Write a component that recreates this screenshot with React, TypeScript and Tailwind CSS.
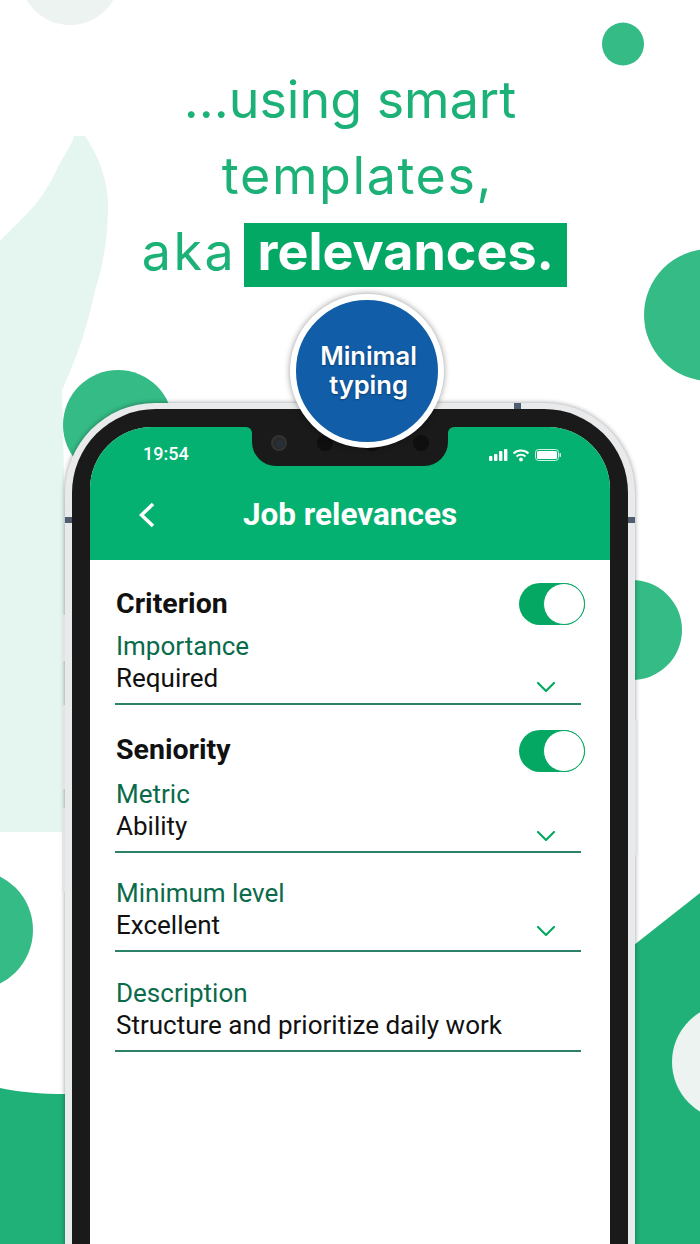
// App.tsx
// Job relevances promo screenshot: phone mockup over soft green shapes

import { ChevronDown } from 'lucide-react'

// Background shapes, drawn behind the copy and the phone
function Backdrop() {
  return (
    <svg className="absolute inset-0" width="700" height="1244" viewBox="0 0 700 1244">
      <path
        d="M0 241 C20 220 42 204 58 167 C66 152 72 145 74 136 L85 136 C98 155 108 180 108 205 C108 240 102 270 95 290 C88 325 76 360 62 390 L66 560 L66 832 L0 832 Z"
        fill="#e5f5ef"
      />
      <circle cx="70" cy="-25" r="50" fill="#ecf3f1" />
      <ellipse cx="623" cy="44" rx="21" ry="21.5" fill="#35bb85" />
      <circle cx="710" cy="315" r="66" fill="#35bb85" />
      <circle cx="118" cy="425" r="55" fill="#35bb85" />
      <circle cx="632" cy="630" r="50" fill="#35bb85" />
      <circle cx="-27" cy="930" r="60" fill="#35bb85" />
      <path d="M0 1088 C20 1092 40 1094 66 1094 L66 1244 L0 1244 Z" fill="#1fb177" />
      <path d="M634 945 L700 893 L700 1244 L634 1244 Z" fill="#1fb177" />
      <circle cx="730" cy="1062" r="58" fill="#ecf3f1" />
    </svg>
  )
}

function Toggle() {
  return (
    <div className="w-[66px] h-[42px] rounded-full bg-[#05a862] flex justify-end -mr-1">
      <div className="w-[42px] h-[42px] rounded-full bg-white border border-[#05a862]" />
    </div>
  )
}

function SectionHead({ title, gap, nudge = '' }: { title: string; gap: string; nudge?: string }) {
  return (
    <div className={`flex items-center justify-between h-[42px] ${gap}`}>
      <span className={`text-[28.5px] font-bold text-[#111111] pl-px ${nudge}`}>{title}</span>
      <Toggle />
    </div>
  )
}

interface FieldProps {
  label: string
  value: string
  chevron?: string
  gap?: string
}

function Field({ label, value, chevron, gap = 'mb-[25px]' }: FieldProps) {
  return (
    <div className={`border-b-2 border-[#2c8268] pb-[9px] ${gap}`}>
      <div className="text-[26px] leading-[31px] text-[#0a6b4b] pl-px">{label}</div>
      <div className="flex items-end justify-between h-[32px]">
        <span className="text-[26px] leading-[32px] text-[#111111] pl-px">{value}</span>
        {chevron && <ChevronDown className={`w-[32px] h-[32px] mr-[19px] text-[#05a862] ${chevron}`} strokeWidth={1.6} />}
      </div>
    </div>
  )
}

function StatusIcons() {
  return (
    <svg width="72" height="14" viewBox="0 0 72 14" fill="none">
      <rect x="0" y="8" width="3.4" height="5" rx="1" fill="#fff" />
      <rect x="5" y="6" width="3.4" height="7" rx="1" fill="#fff" />
      <rect x="10" y="3" width="3.4" height="10" rx="1" fill="#fff" />
      <rect x="15" y="1" width="3.4" height="12" rx="1" fill="#fff" />
      <path d="M24.5 5.5 C28.5 1.5 35.5 1.5 39.5 5.5" stroke="#fff" strokeWidth="2" />
      <path d="M27.5 8.5 C30 6.2 34 6.2 36.5 8.5" stroke="#fff" strokeWidth="2" />
      <circle cx="32" cy="11.5" r="1.9" fill="#fff" />
      <rect x="46.5" y="1.5" width="23" height="11" rx="3" stroke="#d4f2e4" />
      <rect x="48" y="3" width="20" height="8" rx="1.5" fill="#fff" />
      <rect x="70.5" y="5" width="1.5" height="4" rx="0.7" fill="#d4f2e4" />
    </svg>
  )
}

function Notch() {
  return (
    <div className="absolute left-[162px] top-0 w-[196px] h-[39px] bg-[#1a1a1a] rounded-b-[24px] flex items-center pl-[19px] pb-[7px]">
      {/* flared corners where the notch meets the screen edge */}
      <div className="absolute -left-[6px] top-0 w-[6px] h-[6px] bg-[#1a1a1a]">
        <div className="w-full h-full bg-[#05b171] rounded-tr-[6px]" />
      </div>
      <div className="absolute -right-[6px] top-0 w-[6px] h-[6px] bg-[#1a1a1a]">
        <div className="w-full h-full bg-[#05b171] rounded-tl-[6px]" />
      </div>
      <div className="w-[16px] h-[16px] rounded-full bg-[#2a2a2a] border-2 border-[#333] flex items-center justify-center">
        <div className="w-[7px] h-[7px] rounded-full bg-[#26303c]" />
      </div>
      <div className="w-[16px] h-[16px] rounded-full bg-[#0f0f0f] ml-[30px]" />
      <div className="w-[16px] h-[16px] rounded-full bg-[#0f0f0f] ml-[31px]" />
      <div className="w-[16px] h-[16px] rounded-full bg-[#0f0f0f] ml-[33px]" />
    </div>
  )
}

function Phone() {
  return (
    <div className="relative ml-[65px] mt-[113px] w-[570px] h-[900px] rounded-t-[90px] bg-[#e9eaec] pt-[6px] px-[7px] shadow-[0_0_5px_rgba(0,0,0,0.4)]">
      {/* antenna ticks and side buttons */}
      <div className="absolute left-[449px] top-0 w-[7px] h-[6px] bg-[#4e5d70]" />
      <div className="absolute left-0 top-[114px] w-[7px] h-[6px] bg-[#4e5d70]" />
      <div className="absolute right-0 top-[114px] w-[7px] h-[6px] bg-[#4e5d70]" />
      <div className="absolute -left-[3px] top-[212px] w-[3px] h-[46px] bg-[#e3e4e6]" />
      <div className="absolute -left-[3px] top-[302px] w-[3px] h-[84px] bg-[#e3e4e6]" />
      <div className="absolute -left-[3px] top-[405px] w-[3px] h-[84px] bg-[#e3e4e6]" />
      <div className="absolute -right-[3px] top-[317px] w-[3px] h-[135px] bg-[#e3e4e6]" />

      <div className="h-full rounded-t-[84px] bg-[#1a1a1a] pt-[18px] px-[18px]">
        <div className="relative h-full rounded-t-[62px] overflow-hidden bg-white font-[Roboto,sans-serif]">
          <Notch />
          <div className="h-[133px] bg-[#05b171] text-white">
            <div className="flex items-center justify-between h-[52px] pt-[3px] pl-[53px] pr-[49px]">
              <span className="text-[18px] font-medium -mt-[2px]">19:54</span>
              <StatusIcons />
            </div>
            <div className="relative flex items-center justify-center h-[71px]">
              <svg className="absolute left-[48px]" width="17" height="26" viewBox="0 0 17 26" fill="none">
                <path d="M15 2 L3.5 13 L15 24" stroke="#fff" strokeWidth="3.5" />
              </svg>
              <span className="text-[31.5px] font-bold">Job relevances</span>
            </div>
          </div>
          <div className="pt-[23px] pl-[25px] pr-[29px]">
            <SectionHead title="Criterion" gap="mb-[6px]" />
            <Field label="Importance" value="Required" chevron="-mb-[9px]" />
            <SectionHead title="Seniority" gap="mb-[7px]" nudge="-mt-[2px]" />
            <Field label="Metric" value="Ability" chevron="-mb-[10px]" />
            <Field label="Minimum level" value="Excellent" chevron="-mb-[6px]" gap="mb-[26px]" />
            <Field label="Description" value="Structure and prioritize daily work" />
          </div>
        </div>
      </div>
    </div>
  )
}

export default function App() {
  return (
    <div className="relative w-[700px] h-[1244px] overflow-hidden bg-white">
      <Backdrop />
      <div className="relative pt-[62px]">
        <div className="text-center text-[#1cb176] text-[52px] leading-[76px] font-[Inter,sans-serif]">
          <div>...using smart</div>
          <div className="tracking-[1.6px] pl-[15px]">templates,</div>
          <div className="flex justify-center items-center gap-[8px] h-[76px] pl-[9px]">
            <span className="tracking-[2.5px]">aka</span>
            <span className="w-[323px] h-[64px] mt-[6px] bg-[#04a865] text-white font-bold text-[52px] leading-[58px]">relevances.</span>
          </div>
        </div>
        <Phone />
      </div>
      {/* Badge over the phone's top edge */}
      <div className="absolute left-[290px] top-[294px] w-[154px] h-[154px] rounded-full bg-[#115da8] border-[6px] border-white shadow-[0_0_6px_rgba(0,0,0,0.4)] flex items-center justify-center text-center text-white font-[Inter,sans-serif] font-semibold text-[25.5px] leading-[29px] pb-[2px] pl-[3px]">
        <span className="[text-shadow:0_1px_2px_rgba(0,0,0,0.35)]">Minimal<br />typing</span>
      </div>
    </div>
  )
}
